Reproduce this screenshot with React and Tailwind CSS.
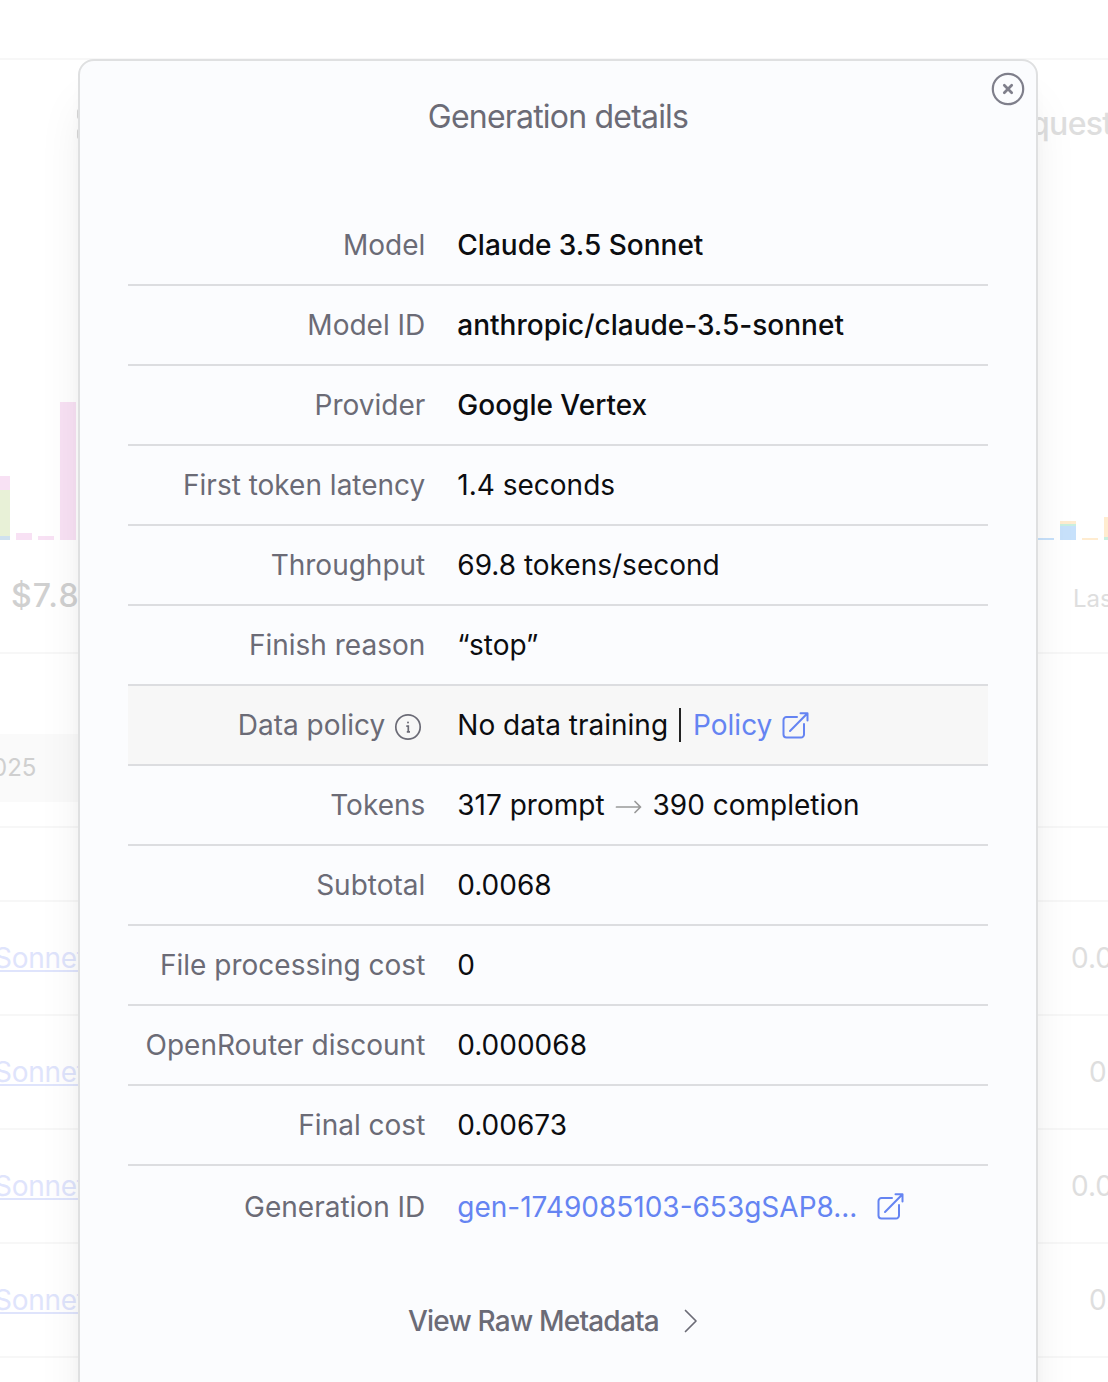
import React from "react";

function ExternalIcon() {
  return (
    <svg className="h-8 w-8 shrink-0" viewBox="0 0 32 32" fill="none" stroke="currentColor" strokeWidth="2" strokeLinecap="round" strokeLinejoin="round">
      <path d="M18 8H7.500a3 3 0 0 0-3 3v14.500a3 3 0 0 0 3 3h14.500a3 3 0 0 0 3-3V15" />
      <path d="M11 22L28.500 4.300M21.500 4.300H28.500V11.500" />
    </svg>
  );
}

function InfoIcon() {
  return (
    <svg className="h-7 w-7 shrink-0" viewBox="0 0 28 28" fill="none" stroke="currentColor">
      <circle cx="14" cy="14" r="12.200" strokeWidth="1.700" />
      <circle cx="14" cy="9.500" r="1" fill="currentColor" stroke="none" />
      <path d="M12.300 13.200H14.300V18.800M12.800 18.800H16" strokeWidth="1.700" />
    </svg>
  );
}

function CloseIcon() {
  return (
    <svg className="h-9 w-9" viewBox="0 0 36 36" fill="none" stroke="currentColor" strokeLinecap="round">
      <circle cx="18" cy="18" r="15.200" strokeWidth="2.200" />
      <path d="M14.300 14.300L21.700 21.700M21.700 14.300L14.300 21.700" strokeWidth="2.700" />
    </svg>
  );
}

function ArrowIcon() {
  return (
    <svg className="h-7 w-7 shrink-0 text-[#999]" viewBox="0 0 28 28" fill="none" stroke="currentColor" strokeWidth="1.700" strokeLinecap="round" strokeLinejoin="round">
      <path d="M1.500 16H25.500M20 10.500L25.500 16L20 21.500" />
    </svg>
  );
}

const rows = [
  { label: "Model", value: "Claude 3.5 Sonnet", strong: true },
  { label: "Model ID", value: "anthropic/claude-3.5-sonnet", strong: true },
  { label: "Provider", value: "Google Vertex", strong: true },
  { label: "First token latency", value: "1.4 seconds" },
  { label: "Throughput", value: "69.8 tokens/second" },
  { label: "Finish reason", value: "“stop”" },
  {
    label: (
      <span className="flex items-center">
        Data policy
        <span className="ml-[9px] mr-[3px] mt-[3px]"><InfoIcon /></span>
      </span>
    ),
    value: (
      <span className="flex items-center">
        No data training
        <span className="mr-[12px] ml-[11px] h-[34px] w-[2px] bg-[#222]" />
        <span className="flex items-center text-[#6584f2]">
          Policy
          <span className="ml-[7px]"><ExternalIcon /></span>
        </span>
      </span>
    ),
    highlighted: true,
  },
  {
    label: "Tokens",
    value: (
      <span className="flex items-center">
        317 prompt
        <span className="mx-[10px]"><ArrowIcon /></span>
        390 completion
      </span>
    ),
  },
  { label: "Subtotal", value: "0.0068" },
  { label: "File processing cost", value: "0" },
  { label: "OpenRouter discount", value: "0.000068" },
  { label: "Final cost", value: "0.00673" },
  {
    label: "Generation ID",
    value: (
      <span className="flex items-center text-[#6584f2]">
        gen-1749085103-653gSAP8...
        <span className="-mt-[2px] ml-[16.5px]"><ExternalIcon /></span>
      </span>
    ),
  },
];

function DetailRow({ label, value, strong, highlighted, last }) {
  return (
    <div className={`flex h-20 items-center border-[#dcdde0] text-[28px] leading-10 whitespace-nowrap ${last ? "pt-[2px]" : "border-b-2"} ${highlighted ? "bg-[#f7f7f7]" : ""}`}>
      <div className="flex w-[297.3px] shrink-0 justify-end text-[#6b6b76]">{label}</div>
      <div className={`ml-8 text-[#0c0d10] ${strong ? "font-medium" : ""}`}>{value}</div>
    </div>
  );
}

function Bar({ parts }) {
  return (
    <div className="flex w-4 shrink-0 flex-col">
      {parts.map(([height, color], i) => (
        <div key={i} style={{ height, backgroundColor: color }} />
      ))}
    </div>
  );
}

function ActivityPage() {
  return (
    <div className="text-[#dedede]">
      <div className="h-[60px] border-b-2 border-[#f7f7f7]" />
      <div className="flex h-[594px] justify-between border-b-2 border-[#f7f7f7]">
        <div className="w-[90px]">
          <div className="flex h-20 items-center justify-end pt-[48px] pr-[9px]">
            <div className="flex flex-col gap-[10px]">
              <div className="h-[10px] w-1 rounded-sm bg-[#d8d8d8]" />
              <div className="h-[10px] w-1 rounded-sm bg-[#d8d8d8]" />
            </div>
          </div>
          <div className="-ml-[5.6px] flex h-[400px] items-end gap-[6px]">
            <Bar parts={[[14, "#f8e1f4"], [46, "#e8f1d7"], [4, "#cfe1ef"]]} />
            <Bar parts={[[7, "#f8e1f4"]]} />
            <Bar parts={[[4, "#f8e1f4"]]} />
            <Bar parts={[[138, "#f8e1f4"]]} />
          </div>
          <div className="mt-[36px] pl-[11px] text-[32px] leading-10 font-medium tracking-[1.2px] text-[#d0d0d0]">$7.85</div>
        </div>
        <div className="w-[78px]">
          <div className="flex h-20 items-center pt-[48px]">
            <span className="text-[32px] font-medium tracking-[-0.7px]">quest</span>
          </div>
          <div className="flex h-[400px] items-end gap-[6px] pl-[8px]">
            <Bar parts={[[2, "#c7e1fb"]]} />
            <Bar parts={[[3, "#ffecd0"], [2, "#c9efdf"], [14, "#c7e1fb"]]} />
            <Bar parts={[[2, "#ffecd0"]]} />
            <Bar parts={[[20, "#ffecd0"], [3, "#c9efdf"]]} />
          </div>
          <div className="mt-[39px] pl-[43px] text-[24px] leading-10">Last</div>
        </div>
      </div>
      <div className="h-[174px] border-b-2 border-[#f7f7f7] pt-20">
        <div className="flex h-[68px] w-[120px] items-center bg-[#fafafa] text-[#cfcfcf]">
          <span className="-ml-[8px] text-[24px]">025</span>
        </div>
      </div>
      <div className="h-[74px] border-b-2 border-[#f7f7f7]" />
      {["0.00", "0.0", "0.00", "0.0"].map((cost, i) => (
        <div key={i} className="flex h-[114px] items-center justify-between border-b-2 border-[#f7f7f7] text-[28px]">
          <span className="-ml-[6px] tracking-[-0.3px] text-[#dfe4fc] underline decoration-2 underline-offset-[2px] [text-decoration-skip-ink:none]">Sonnet</span>
          <span className={i % 2 ? "w-[19px]" : "w-[37px]"}>{cost}</span>
        </div>
      ))}
    </div>
  );
}

export default function App() {
  return (
    <div className="relative h-[1382px] w-[1108px] overflow-hidden bg-white font-['Inter',sans-serif] whitespace-nowrap">
      <ActivityPage />
      <section className="absolute top-[59px] left-[78px] h-[1420px] w-[960px] rounded-2xl border-2 border-[#dfe0e1] bg-[#fbfcfe] px-12 shadow-[0_40px_50px_-10px_rgba(0,0,0,0.1),0_16px_20px_-12px_rgba(0,0,0,0.1)]">
        <button className="absolute top-[10px] right-[10px] text-[#7f7f8b]" aria-label="Close">
          <CloseIcon />
        </button>
        <h2 className="pt-9 text-center text-[32px] leading-10 tracking-tight text-[#6b6b76]">Generation details</h2>
        <div className="mt-[69px]">
          {rows.map((row, i) => (
            <DetailRow key={i} {...row} last={i === rows.length - 1} />
          ))}
        </div>
        <button className="mx-auto mt-[35px] flex h-[80px] items-center pr-[3px] text-[28px] font-medium tracking-[-0.8px] text-[#6b6b76]">
          View Raw Metadata
          <svg className="ml-[18px] h-7 w-7" viewBox="0 0 28 28" fill="none" stroke="currentColor" strokeWidth="1.700" strokeLinecap="round" strokeLinejoin="round">
            <path d="M8.500 3.500L19 14L8.500 24.500" />
          </svg>
        </button>
      </section>
    </div>
  );
}
